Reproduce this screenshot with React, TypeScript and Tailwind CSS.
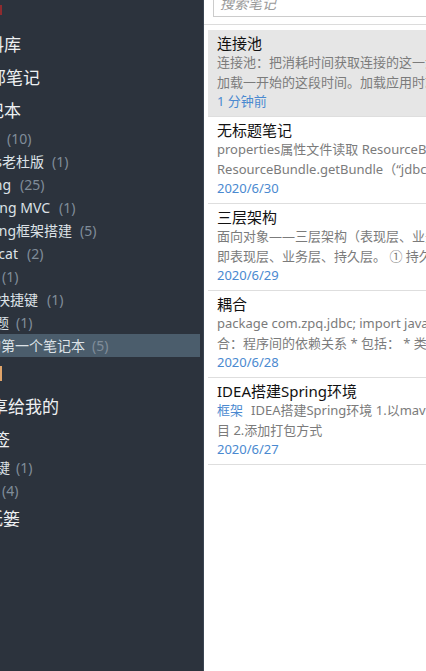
import React from "react";

type Row =
  | { kind: "big"; name: string; w: string }
  | { kind: "sub"; name: string; w: string; ml: string; count: number; active?: boolean }
  | { kind: "mark"; cls: string }
  | { kind: "top" };

// left edge of the sidebar is cropped, so names are right-aligned to where they end
const rows: Row[] = [
  { kind: "top" },
  { kind: "big", name: "资料库", w: "w-[21px]" },
  { kind: "big", name: "全部笔记", w: "w-[40px]" },
  { kind: "big", name: "笔记本", w: "w-[21px]" },
  { kind: "sub", name: "JDBC", w: "w-[0px]", ml: "ml-[7px]", count: 10 },
  { kind: "sub", name: "Mybatis老杜版", w: "w-[44px]", ml: "ml-[8px]", count: 1 },
  { kind: "sub", name: "Spring", w: "w-[11px]", ml: "ml-[9px]", count: 25 },
  { kind: "sub", name: "Spring MVC", w: "w-[50px]", ml: "ml-[9px]", count: 1 },
  { kind: "sub", name: "Spring框架搭建", w: "w-[72px]", ml: "ml-[8px]", count: 5 },
  { kind: "sub", name: "Tomcat", w: "w-[18px]", ml: "ml-[9px]", count: 2 },
  { kind: "sub", name: "Git", w: "w-[0px]", ml: "ml-[2px]", count: 1 },
  { kind: "sub", name: "IDEA快捷键", w: "w-[38px]", ml: "ml-[9px]", count: 1 },
  { kind: "sub", name: "常见问题", w: "w-[9px]", ml: "ml-[7px]", count: 1 },
  { kind: "sub", name: "我的第一个笔记本", w: "w-[85px]", ml: "ml-[7px]", count: 5, active: true },
  { kind: "mark", cls: "bg-[#e0a46a]" },
  { kind: "big", name: "分享给我的", w: "w-[59px]" },
  { kind: "big", name: "标签", w: "w-[10px]" },
  { kind: "sub", name: "快捷键", w: "w-[10px]", ml: "ml-[6px]", count: 1 },
  { kind: "sub", name: "Java", w: "w-[0px]", ml: "ml-[2px]", count: 4 },
  { kind: "big", name: "废纸篓", w: "w-[20px]" },
];

const notes = [
  {
    title: "连接池",
    lines: ["连接池：把消耗时间获取连接的这一步提前到", "加载一开始的这段时间。加载应用时就创建"],
    date: "1 分钟前",
    active: true,
  },
  {
    title: "无标题笔记",
    lines: ["properties属性文件读取 ResourceBundle", "ResourceBundle.getBundle（“jdbc”）"],
    date: "2020/6/30",
  },
  {
    title: "三层架构",
    lines: ["面向对象——三层架构（表现层、业务层、持久层）", "即表现层、业务层、持久层。 ① 持久层"],
    date: "2020/6/29",
  },
  {
    title: "耦合",
    lines: ["package com.zpq.jdbc; import java.sql.*;", "合：程序间的依赖关系 * 包括： * 类之间的"],
    date: "2020/6/28",
  },
  {
    title: "IDEA搭建Spring环境",
    tag: "框架",
    lines: ["IDEA搭建Spring环境 1.以maven创建项", "目 2.添加打包方式"],
    date: "2020/6/27",
  },
];

function Sidebar() {
  return (
    <div className="w-[204px] shrink-0 h-full bg-[#2c333d] border-r border-[#3b4552] overflow-hidden">
      <div className="mr-[3px]">
        {rows.map((r, i) => {
          if (r.kind === "top") {
            return (
              <div key={i} className="h-[28px] pt-[5px]">
                <div className="w-[2px] h-[10px] bg-[#8e2b2f]" />
              </div>
            );
          }
          if (r.kind === "mark") {
            return (
              <div key={i} className="h-[33px] flex items-center">
                <div className={`w-[2px] h-[15px] ${r.cls}`} />
              </div>
            );
          }
          if (r.kind === "big") {
            return (
              <div key={i} className="h-[33px] flex items-center text-[17px] text-[#eef0f2]">
                <div className={`${r.w} shrink-0 flex justify-end whitespace-nowrap`}>{r.name}</div>
              </div>
            );
          }
          return (
            <div
              key={i}
              className={`h-[23px] flex items-center text-[14px] whitespace-nowrap ${r.active ? "bg-[#4b5d6c]" : ""}`}
            >
              <div className={`${r.w} shrink-0 flex justify-end text-[#dde2e7]`}>{r.name}</div>
              <span className={`${r.ml} text-[#808d9a]`}>({r.count})</span>
            </div>
          );
        })}
      </div>
    </div>
  );
}

function NoteList() {
  return (
    <div className="flex-1 h-full bg-white overflow-hidden">
      {/* search */}
      <div className="h-[25px] border-b border-[#dcdcdc] overflow-hidden flex items-end pb-[7px] pl-[9px]">
        <div className="h-[28px] w-[260px] shrink-0 border border-[#cccccc] flex items-center pl-[6px] text-[14px] italic text-[#9a9a9a]">
          搜索笔记
        </div>
      </div>

      <div className="pt-[5px] pl-[4px]">
        {notes.map((n, i) => (
          <div
            key={i}
            className={`h-[87px] border-b border-[#dedede] pl-[9px] pt-[4px] overflow-hidden ${n.active ? "bg-[#e6e6e6]" : ""}`}
          >
            <div className="text-[15px] leading-[19px] text-[#111111] whitespace-nowrap">{n.title}</div>
            {n.lines.map((l, j) => (
              <div key={j} className="text-[13px] leading-[19.5px] text-[#7b7b7b] whitespace-nowrap">
                {j === 0 && n.tag && <span className="text-[#4a89d0] mr-[8px]">{n.tag}</span>}
                {l}
              </div>
            ))}
            <div className="text-[13px] leading-[19px] text-[#4a89d0]">{n.date}</div>
          </div>
        ))}
      </div>
    </div>
  );
}

export default function App() {
  return (
    <div
      className="w-[426px] h-[671px] flex overflow-hidden"
      style={{ fontFamily: '"Noto Sans", "Noto Sans CJK SC", sans-serif' }}
    >
      <Sidebar />
      <NoteList />
    </div>
  );
}
